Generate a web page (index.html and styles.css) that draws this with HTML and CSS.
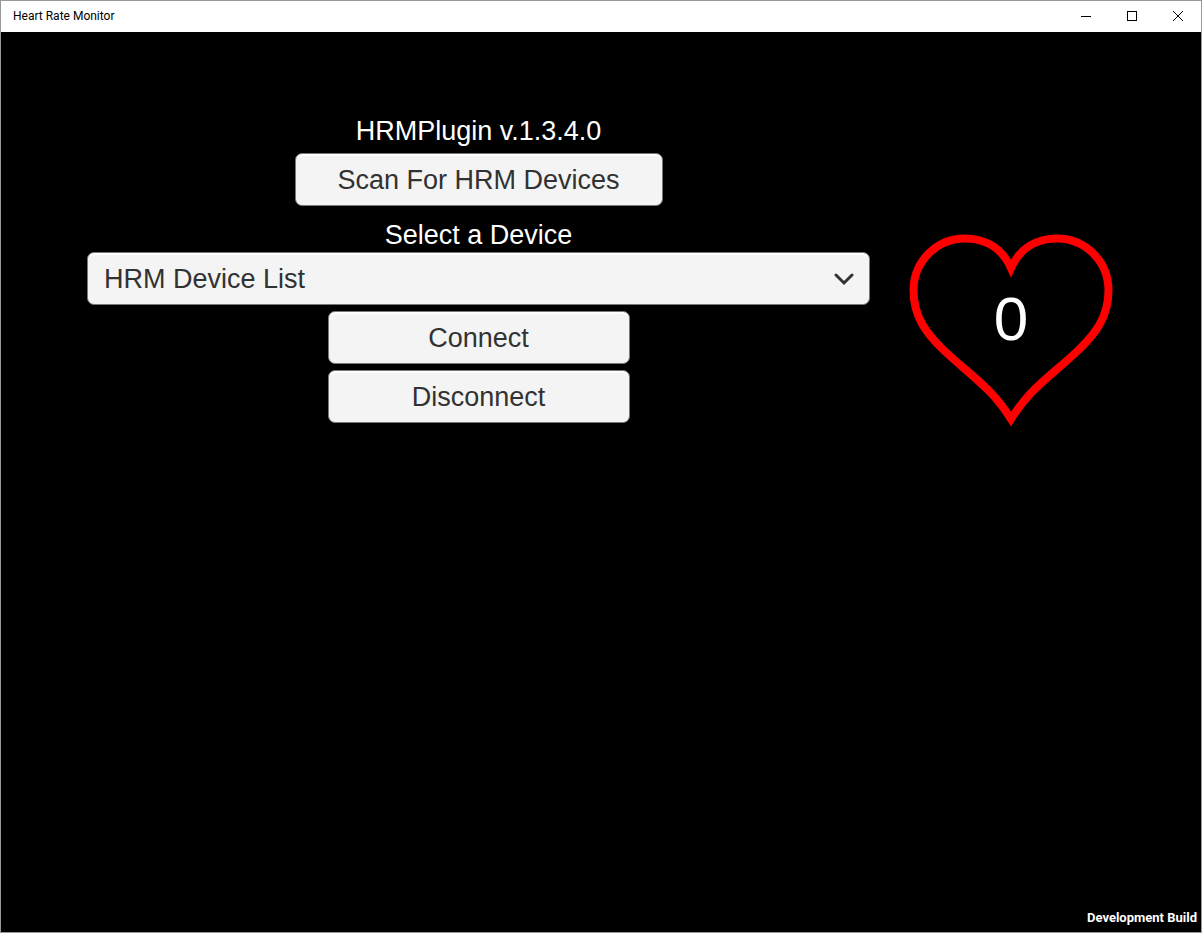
FILE: index.html
```html
<!DOCTYPE html>
<html lang="en">
<head>
<meta charset="utf-8">
<title>Heart Rate Monitor</title>
<link rel="stylesheet" href="styles.css">
</head>
<body>
<div class="window">
  <header class="titlebar">
    <h1 class="title">Heart Rate Monitor</h1>
    <div class="window-controls">
      <button class="window-button" type="button" aria-label="Minimize">
        <svg width="10" height="10" viewBox="0 0 10 10" shape-rendering="crispEdges"><path d="M0 5.5H10"/></svg>
      </button>
      <button class="window-button" type="button" aria-label="Maximize">
        <svg width="10" height="10" viewBox="0 0 10 10" shape-rendering="crispEdges"><path d="M.5 .5H9.500V9.500H.5Z"/></svg>
      </button>
      <button class="window-button" type="button" aria-label="Close">
        <svg width="10" height="10" viewBox="0 0 10 10"><path d="M0 0L10 10M10 0L0 10"/></svg>
      </button>
    </div>
  </header>
  <main class="app">
    <section class="controls">
      <p class="label version">HRMPlugin v.1.3.4.0</p>
      <button class="control scan" type="button">Scan For HRM Devices</button>
      <label class="label" for="device">Select a Device</label>
      <div class="dropdown">
        <select class="control device-list" id="device">
          <option>HRM Device List</option>
        </select>
        <svg class="chevron" width="20" height="14" viewBox="0 0 20 14"><path d="M2 3L10 11L18 3"/></svg>
      </div>
      <button class="control action" type="button">Connect</button>
      <button class="control action" type="button">Disconnect</button>
    </section>
    <section class="heart" aria-label="Heart rate">
      <svg class="heart-outline" viewBox="0 0 204 194"><path d="M102 35C93 15 76 5.500 56 5.500C27.500 5.500 4.500 28.500 4.500 57.500C4.500 84 18 101 34.500 117C50 132 68 145 82.500 160.500C90 168.500 96 176.500 102 186C108 176.500 114 168.500 121.500 160.500C136 145 154 132 169.500 117C186 101 199.500 84 199.500 57.500C199.500 28.500 176.500 5.500 148 5.500C128 5.500 111 15 102 35Z"/></svg>
      <output class="rate">0</output>
    </section>
  </main>
  <footer class="build">Development Build</footer>
</div>
</body>
</html>
```
FILE: styles.css
```css
* {
  box-sizing: border-box;
}

body {
  margin: 0;
  background: #000;
  color: #fff;
  font-family: "Liberation Sans", Arial, sans-serif;
}

.window {
  display: flex;
  flex-direction: column;
  min-height: 100vh;
  border: 1px solid #999;
}

.titlebar {
  display: flex;
  align-items: center;
  justify-content: space-between;
  height: 31px;
  padding-left: 12px;
  background: #fff;
  color: #000;
}

.title {
  margin: 0;
  padding-bottom: 2px;
  font: 400 12px/16px Roboto, sans-serif;
}

.window-controls {
  display: flex;
  align-self: stretch;
}

.window-button {
  display: grid;
  place-items: center;
  width: 46px;
  padding: 0 0 2px;
  border: 0;
  background: none;
}

.window-button svg {
  fill: none;
  stroke: #000;
}

.app {
  display: grid;
  grid-template-columns: 1fr 204px;
  gap: 39px;
  flex: 1;
  align-items: start;
  padding: 84px 88px 0 86px;
}

.controls {
  display: flex;
  flex-direction: column;
  align-items: center;
  gap: 6px;
}

.label {
  margin: 8px 0 -5px;
  font-size: 27px;
  line-height: 31px;
}

.version {
  margin: 0;
}

.control {
  height: 53px;
  padding: 2px 16px 0;
  border: 1px solid #777;
  border-radius: 7px;
  background: #f4f4f4;
  box-shadow: inset 0 2px 0 #fff;
  color: #323232;
  font: 27px/31px "Liberation Sans", Arial, sans-serif;
}

.scan {
  width: 47%;
}

.action {
  width: 302px;
}

.dropdown {
  position: relative;
  width: 100%;
}

.device-list {
  display: block;
  width: 100%;
  appearance: none;
}

.chevron {
  position: absolute;
  top: 20px;
  right: 16px;
  fill: none;
  stroke: #323232;
  stroke-width: 3;
  stroke-linecap: round;
  pointer-events: none;
}

.heart {
  position: relative;
  margin-top: 117px;
}

.heart-outline {
  display: block;
  width: 100%;
  fill: none;
  stroke: #f00;
  stroke-width: 8;
  stroke-miterlimit: 10;
}

.rate {
  position: absolute;
  inset: 0 0 22px;
  display: grid;
  place-items: center;
  font-size: 62px;
  line-height: 72px;
}

.build {
  padding: 0 4px 6px;
  font: 700 13px/16px Roboto, sans-serif;
  text-align: right;
}
```
